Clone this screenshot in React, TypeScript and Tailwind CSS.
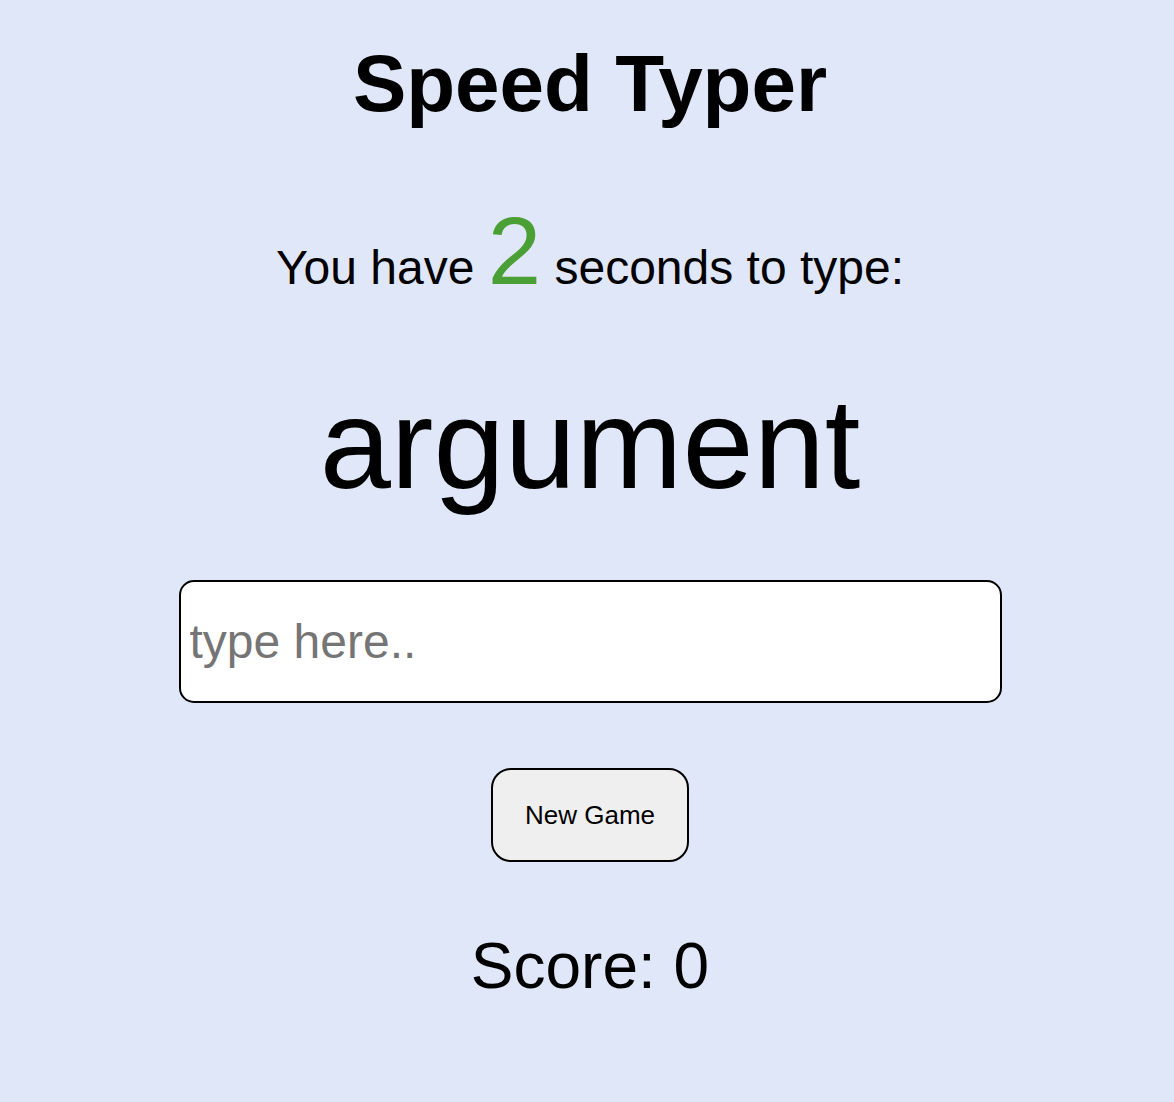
export default function App() {
  return (
    <div className="min-h-screen bg-[#e0e7f8] pl-[6px] font-['Liberation_Sans',Arial,sans-serif] text-black flex flex-col items-center">
      <h1 className="mt-[44px] text-[80px] leading-none font-bold">Speed Typer</h1>
      <div className="mt-[79px] text-[48px] leading-none whitespace-pre">
        You have <span className="text-[96px] leading-none text-[#4aa034]">2</span> seconds to type:
      </div>
      <div className="mt-[81px] text-[128px] leading-none">argument</div>
      <input
        className="mt-[72px] w-[823px] h-[123px] bg-white border-2 border-black rounded-[15px] pl-[9px] text-[48px] placeholder:text-[#757575] focus:outline-none"
        placeholder="type here.."
      />
      <button className="mt-[65px] w-[198px] h-[94px] bg-[#efefef] border-2 border-black rounded-[20px] text-[26px]">
        New Game
      </button>
      <div className="mt-[72px] text-[64px] leading-none">Score: 0</div>
    </div>
  );
}
